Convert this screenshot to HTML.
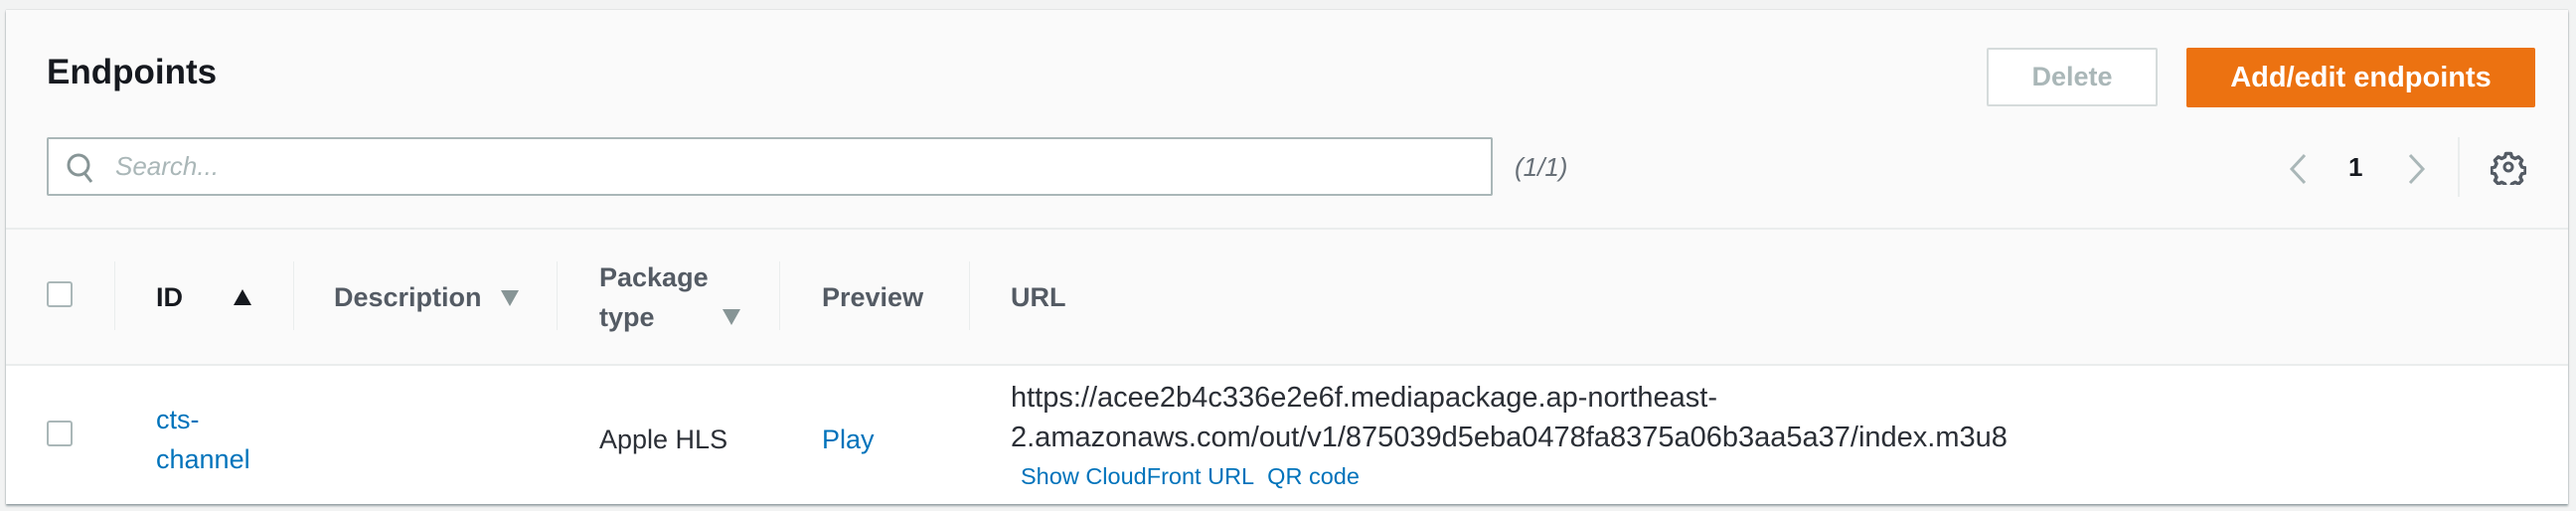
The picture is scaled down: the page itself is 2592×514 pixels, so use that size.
<!DOCTYPE html>
<html><head><meta charset="utf-8"><style>
*{box-sizing:border-box;margin:0;padding:0}
body{width:2592px;height:514px;background:#f2f3f3;font-family:"Liberation Sans",sans-serif;position:relative;overflow:hidden}
.panel{position:absolute;left:6px;top:10px;width:2578px;height:497px;background:#fafafa;box-shadow:0 2px 2px rgba(0,28,36,.35),0 0 1px rgba(0,28,36,.3)}
.a{position:absolute;white-space:nowrap}
.cb{position:absolute;width:26px;height:26px;border:2px solid #aab7b8;border-radius:3px;background:#fff}
.hd{font-weight:bold;font-size:27px;color:#545b64}
.vd{position:absolute;top:253px;width:1px;height:69px;background:#eaeded}
.tx{font-size:27px;color:#16191f}
.lk{color:#0073bb}
</style></head><body>
<div class="panel">
<div class="a" style="left:41px;top:43px;font-size:35px;font-weight:bold;color:#16191f">Endpoints</div>
<div class="a" style="left:1993px;top:38px;width:172px;height:59px;border:2px solid #d5dbdb;background:#fff;border-radius:2px;font-size:27px;font-weight:bold;color:#aab7b8;text-align:center;line-height:55px">Delete</div>
<div class="a" style="left:2194px;top:38px;width:351px;height:60px;background:#ec7211;border-radius:2px;font-size:29px;font-weight:bold;color:#fff;text-align:center;line-height:60px">Add/edit endpoints</div>
<div class="a" style="left:41px;top:128px;width:1455px;height:59px;border:2px solid #aab7b8;background:#fff;border-radius:2px"></div>
<svg class="a" style="left:60px;top:142px" width="30" height="34" viewBox="0 0 30 34"><circle cx="13" cy="14" r="10" fill="none" stroke="#879596" stroke-width="3"/><path d="M19 22l7 9" stroke="#879596" stroke-width="3"/></svg>
<div class="a" style="left:110px;top:142px;font-size:26px;font-style:italic;color:#aab7b8">Search...</div>
<div class="a" style="left:1518px;top:143px;font-size:26px;font-style:italic;color:#687078">(1/1)</div>
<svg class="a" style="left:2295px;top:143px" width="22" height="34"><path d="M18 3L5 17l13 14" fill="none" stroke="#aab7b8" stroke-width="3"/></svg>
<div class="a" style="left:2357px;top:143px;font-size:26px;font-weight:bold;color:#16191f">1</div>
<svg class="a" style="left:2415px;top:143px" width="22" height="34"><path d="M4 3l13 14L4 31" fill="none" stroke="#aab7b8" stroke-width="3"/></svg>
<div class="a" style="left:2467px;top:128px;width:2px;height:60px;background:#eaeded"></div>
<svg class="a" style="left:2500px;top:140px" width="36" height="36" viewBox="-18 -18 36 36"><path d="M-3-16h6l1 4 4 2 4-2 4 4-2 4 2 4 4 1v6l-4 1-2 4 2 4-4 4-4-2-4 2-1 4h-6l-1-4-4-2-4 2-4-4 2-4-2-4-4-1v-6l4-1 2-4-2-4 4-4 4 2 4-2z" fill="none" stroke="#545b64" stroke-width="4" stroke-linejoin="round" transform="scale(.85)"/><circle r="4" fill="none" stroke="#545b64" stroke-width="3"/></svg>
<div class="a" style="left:0;top:219px;width:2578px;height:2px;background:#eaeded"></div>
<div class="a" style="left:0;top:356px;width:2578px;height:141px;background:#fff;border-top:2px solid #eaeded"></div>
<div class="cb" style="left:41px;top:273px"></div>
<div class="vd" style="left:109px"></div><div class="vd" style="left:289px"></div><div class="vd" style="left:554px"></div><div class="vd" style="left:778px"></div><div class="vd" style="left:969px"></div>
<div class="a hd" style="left:151px;top:274px;color:#16191f">ID</div>
<svg class="a" style="left:228px;top:280px" width="20" height="18"><path d="M10 1L19 17H1z" fill="#16191f"/></svg>
<div class="a hd" style="left:330px;top:274px">Description</div>
<svg class="a" style="left:497px;top:281px" width="20" height="18"><path d="M1 1h18L10 17z" fill="#879596"/></svg>
<div class="a hd" style="left:597px;top:254px">Package</div>
<div class="a hd" style="left:597px;top:294px">type</div>
<svg class="a" style="left:720px;top:300px" width="20" height="18"><path d="M1 1h18L10 17z" fill="#879596"/></svg>
<div class="a hd" style="left:821px;top:274px">Preview</div>
<div class="a hd" style="left:1011px;top:274px">URL</div>
<div class="cb" style="left:41px;top:413px"></div>
<div class="a tx lk" style="left:151px;top:397px">cts-</div>
<div class="a tx lk" style="left:151px;top:437px">channel</div>
<div class="a tx" style="left:597px;top:417px;color:#2b2f36">Apple HLS</div>
<div class="a tx lk" style="left:821px;top:417px">Play</div>
<div class="a tx" style="left:1011px;top:374px;font-size:29px;color:#2b2f36">https://acee2b4c336e2e6f.mediapackage.ap-northeast-</div>
<div class="a tx" style="left:1011px;top:414px;font-size:29px;color:#2b2f36">2.amazonaws.com/out/v1/875039d5eba0478fa8375a06b3aa5a37/index.m3u8</div>
<div class="a lk" style="left:1021px;top:456px;font-size:23.5px">Show CloudFront URL&nbsp;&nbsp;QR code</div>
</div>
</body></html>
